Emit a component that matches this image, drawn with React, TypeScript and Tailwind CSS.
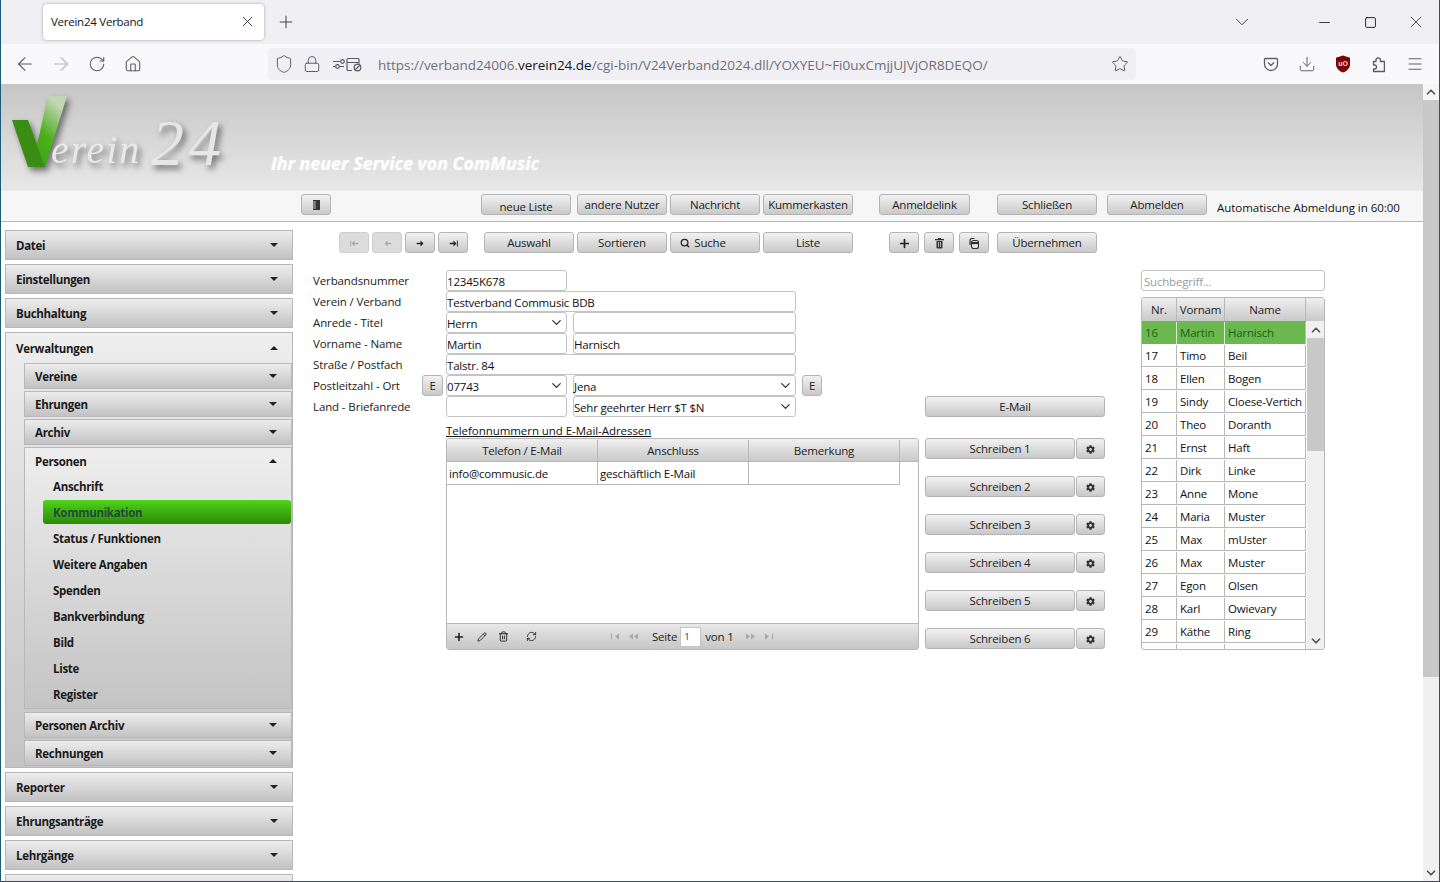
import React from "react";
import { ArrowLeft, ArrowRight, ChevronDown, ChevronUp, Download, House, Lock, Menu, Minus, Pencil, Plus, RefreshCw, RotateCw, Search, Shield, Square, Star, Trash2, X } from "lucide-react";
import { FaCog } from "react-icons/fa";

const Btn = ({ className = "", children }: { className?: string; children?: React.ReactNode }) => (
  <div
    className={`h-[21px] pt-[1px] flex items-center justify-center gap-1 shrink-0 rounded-[3px] border border-[#b4b4b4] bg-linear-to-b from-[#f2f2f2] to-[#c9c9c9] text-[11.5px] text-[#222] ${className}`}
  >
    {children}
  </div>
);

const Arrow = ({ up = false }: { up?: boolean }) => (
  <svg width="8" height="4" viewBox="0 0 8 4" className="shrink-0">
    <polygon points={up ? "4,0 8,4 0,4" : "0,0 8,0 4,4"} fill="#222" />
  </svg>
);

const MenuHead = ({ label, up = false, sub = false }: { label: string; up?: boolean; sub?: boolean }) => (
  <div
    className={`shrink-0 flex items-center justify-between pr-[14px] pl-[10px] font-bold text-[11.5px] tracking-[-0.3px] text-[#1a1a1a] ${sub ? "h-[26px]" : "h-[30px]"} ${
      up ? "" : "border border-[#b8b8b8] bg-linear-to-b from-[#ededed] to-[#c2c2c2]"
    }`}
  >
    <span className="pt-[2px]">{label}</span>
    <Arrow up={up} />
  </div>
);

const Field = ({ w, children, select = false }: { w: string; children?: React.ReactNode; select?: boolean }) => (
  <div
    className={`h-[21px] shrink-0 flex items-center justify-between pl-0 pr-[2px] pt-[2px] rounded-[3px] border border-[#c4c4c4] bg-white text-[11.5px] text-[#111] ${w}`}
  >
    <span>{children}</span>
    {select && <ChevronDown size={15} strokeWidth={2} className="-mt-[2px] text-[#333]" />}
  </div>
);

const FormRow = ({ label, children }: { label: string; children: React.ReactNode }) => (
  <div className="flex h-[21px] items-center">
    <div className="w-[133px] shrink-0 text-[11.5px] tracking-[-0.12px] text-[#222]">{label}</div>
    <div className="flex gap-[6px]">{children}</div>
  </div>
);

const persons = [
  ["16", "Martin", "Harnisch"],
  ["17", "Timo", "Beil"],
  ["18", "Ellen", "Bogen"],
  ["19", "Sindy", "Cloese-Vertich"],
  ["20", "Theo", "Doranth"],
  ["21", "Ernst", "Haft"],
  ["22", "Dirk", "Linke"],
  ["23", "Anne", "Mone"],
  ["24", "Maria", "Muster"],
  ["25", "Max", "mUster"],
  ["26", "Max", "Muster"],
  ["27", "Egon", "Olsen"],
  ["28", "Karl", "Owievary"],
  ["29", "Käthe", "Ring"],
  ["", "", ""],
];

const personLinks = ["Anschrift", "Kommunikation", "Status / Funktionen", "Weitere Angaben", "Spenden", "Bankverbindung", "Bild", "Liste", "Register"];

const PagerIcon = ({ flip = false, bar = true }: { flip?: boolean; bar?: boolean }) => (
  <svg width="10" height="7" viewBox="0 0 10 7" className={flip ? "-scale-x-100" : ""}>
    {bar ? <rect x="1" y="0.5" width="1" height="6" fill="#a8a8a8" /> : <polygon points="0,3.5 4,0.5 4,6.5" fill="#a8a8a8" />}
    <polygon points="5,3.5 9,0.5 9,6.5" fill="#a8a8a8" />
  </svg>
);

// jQuery-UI style seek arrows: small head, short shaft, optional end bar
const SeekIcon = ({ flip = false, bar = false, color = "#222" }: { flip?: boolean; bar?: boolean; color?: string }) => (
  <svg width="9" height="7" viewBox="0 0 12 9" className={flip ? "-scale-x-100" : ""}>
    <rect x="1" y="3.5" width="6" height="2" fill={color} />
    <polygon points="6,0.5 10,4.5 6,8.5" fill={color} />
    {bar && <rect x="10.5" y="0.5" width="1.2" height="8" fill={color} />}
  </svg>
);

const BrowserChrome = () => (
  <div className="shrink-0">
    <div className="h-[44px] bg-[#f0f0f4] flex items-center pl-[42px] text-[#222]">
      <div className="w-[221px] h-[36px] -mt-[1px] rounded-[4px] bg-white shadow-[0_0_3px_rgba(0,0,0,0.35)] flex items-center justify-between pl-[8px] pr-[8px] text-[11.5px] tracking-[-0.25px] text-[#15141a]">
        <span>Verein24 Verband</span>
        <X size={17} strokeWidth={1.1} />
      </div>
      <Plus size={20} strokeWidth={1} className="ml-[12px]" />
      <ChevronDown size={22} strokeWidth={0.9} className="ml-auto" />
      <Minus size={17} strokeWidth={1.2} className="ml-[63px]" />
      <Square size={13} strokeWidth={1.8} className="ml-[31px]" />
      <X size={20} strokeWidth={0.9} className="ml-[29px] mr-[13px]" />
    </div>
    <div className="h-[40px] bg-[#f9f9fb] flex items-center pl-[6px] text-[#5b5b66]">
      <div className="w-[36px] flex justify-center">
        <ArrowLeft size={22} strokeWidth={1.2} />
      </div>
      <div className="w-[36px] flex justify-center">
        <ArrowRight size={22} strokeWidth={1.2} className="text-[#b5b5bb]" />
      </div>
      <div className="w-[36px] flex justify-center">
        <RotateCw size={18} strokeWidth={1.4} />
      </div>
      <div className="w-[36px] flex justify-center">
        <House size={18} strokeWidth={1.4} />
      </div>
      <div className="ml-[117px] w-[868px] h-[32px] shrink-0 rounded-[4px] bg-[#f0f0f4] flex items-center pl-[6px] pr-[7px]">
        <Shield size={20} strokeWidth={1.2} />
        <Lock size={18} strokeWidth={1.3} className="ml-[9px]" />
        <svg width="32" height="16" viewBox="0 0 32 16" fill="none" stroke="#5b5b66" strokeWidth="1.2" className="ml-[12px]">
          <path d="M0 5.5h7M0 10.5h2" />
          <circle cx="9.5" cy="5.5" r="1.8" />
          <circle cx="4.5" cy="10.5" r="1.8" />
          <path d="M7 10.5h4M15 2.5h10a1 1 0 0 1 1 1v4M15 2.5a1 1 0 0 0-1 1v10a1 1 0 0 0 1 1h4M14 6.5h12" />
          <circle cx="24.5" cy="11.5" r="3.3" />
          <path d="M22.5 13.5l4-4" />
        </svg>
        <div className="ml-[13px] pt-[2px] text-[13.5px] tracking-[-0.02px] text-[#6f6f76] whitespace-nowrap">
          https://verband24006.<span className="text-[#15141a]">verein24.de</span>/cgi-bin/V24Verband2024.dll/YOXYEU~Fi0uxCmjjUJVjOR8DEQO/
        </div>
        <Star size={18} strokeWidth={1.3} className="ml-auto" />
      </div>
      <div className="ml-auto flex items-center pr-[6px]">
        <div className="w-[36px] flex justify-center">
          <svg width="16" height="16" viewBox="0 0 16 16" fill="none" stroke="#5b5b66" strokeWidth="1.3">
            <path d="M2.5 2.5h11a1 1 0 0 1 1 1V8a6.5 6.5 0 0 1-13 0V3.5a1 1 0 0 1 1-1z" />
            <path d="M5 6.5l3 3 3-3" />
          </svg>
        </div>
        <div className="w-[36px] flex justify-center">
          <Download size={18} strokeWidth={1.3} />
        </div>
        <div className="w-[36px] flex justify-center">
          <svg width="16" height="18" viewBox="0 0 16 18">
            <path d="M8 0.5l7 2.2v6.5c0 4-3 6.8-7 8.3-4-1.5-7-4.3-7-8.3V2.7z" fill="#800000" />
            <text x="8" y="11" textAnchor="middle" fontSize="7" fontWeight="700" fill="#f2dede" fontFamily="Liberation Sans, sans-serif">
              uO
            </text>
          </svg>
        </div>
        <div className="w-[36px] flex justify-center">
          <svg width="16" height="17" viewBox="0 0 16 17" fill="none" stroke="#5b5b66" strokeWidth="1.3" strokeLinejoin="round">
            <path d="M5 5.5V4a2.2 2.2 0 0 1 4.4 0v1.5h4v10H2.5v-2.5h1a2 2 0 0 0 0-4h-1V5.5z" />
          </svg>
        </div>
        <div className="w-[36px] flex justify-center">
          <Menu size={18} strokeWidth={1.3} />
        </div>
      </div>
    </div>
  </div>
);

const Banner = () => (
  <div className="h-[107px] shrink-0 flex bg-linear-to-b from-[#c6c6c6] to-[#e8e8e8]">
    <svg width="230" height="107" viewBox="0 0 230 107" className="shrink-0 drop-shadow-[3px_4px_3px_rgba(0,0,0,0.5)]">
      <defs>
        <linearGradient id="v-right" x1="0" y1="1" x2="0.4" y2="0">
          <stop offset="0" stopColor="#3aa30c" />
          <stop offset="0.5" stopColor="#4eb01e" />
          <stop offset="1" stopColor="#c3d6b8" />
        </linearGradient>
      </defs>
      <polygon points="11,36 27,36 44,83 27,83" fill="#388d12" />
      <polygon points="47,12 66,12 44,83 36,61" fill="url(#v-right)" />
      <text x="50" y="79" fontFamily="Liberation Serif" fontStyle="italic" fontSize="40" fill="#e9e9e9" textLength="88">
        erein
      </text>
      <text x="150" y="81" fontFamily="Liberation Serif" fontStyle="italic" fontSize="66" fill="#e6e6e6" textLength="70">
        24
      </text>
    </svg>
    <div className="ml-[40px] pt-[66px] text-[18px] tracking-[-0.08px] leading-[26px] font-bold italic text-white/90 whitespace-nowrap [text-shadow:0_0_2px_rgba(255,255,255,0.6)]">
      Ihr neuer Service von ComMusic
    </div>
  </div>
);

const TopBar = () => (
  <div className="h-[31px] shrink-0 flex pt-[3px] bg-[#f6f6f6] border-b border-[#b8b8b8]">
    <Btn className="ml-[300px] w-[30px]">
      <svg width="7" height="10" viewBox="0 0 7 10">
        <rect x="0" y="0" width="7" height="10" fill="#333" />
        <path d="M0 2h3M0 4h3M0 6h3M0 8h3" stroke="#ddd" strokeWidth="0.8" />
      </svg>
    </Btn>
    <Btn className="ml-[150px] w-[90px] pt-[4px]">neue Liste</Btn>
    <Btn className="ml-[6px] w-[90px]">andere Nutzer</Btn>
    <Btn className="ml-[3px] w-[90px]">Nachricht</Btn>
    <Btn className="ml-[3px] w-[90px]">Kummerkasten</Btn>
    <Btn className="ml-[26px] w-[91px]">Anmeldelink</Btn>
    <Btn className="ml-[27px] w-[100px]">Schließen</Btn>
    <Btn className="ml-[10px] w-[100px]">Abmelden</Btn>
    <div className="ml-[10px] pt-[5px] text-[11.5px] tracking-[-0.03px] text-[#111] whitespace-nowrap">Automatische Abmeldung in 60:00</div>
  </div>
);

const Sidebar = () => (
  <div className="w-[292px] shrink-0 pl-[4px] pt-[8px] flex flex-col gap-[4px] overflow-hidden">
    <MenuHead label="Datei" />
    <MenuHead label="Einstellungen" />
    <MenuHead label="Buchhaltung" />
    <div className="h-[436px] shrink-0 border border-[#b8b8b8] bg-linear-to-b from-[#eeeeee] to-[#c4c4c4] flex flex-col">
      <MenuHead label="Verwaltungen" up />
      <div className="pl-[18px] flex flex-col gap-[2px]">
        <MenuHead label="Vereine" sub />
        <MenuHead label="Ehrungen" sub />
        <MenuHead label="Archiv" sub />
        <div className="border border-[#b8b8b8] bg-linear-to-b from-[#eeeeee] to-[#c4c4c4]">
          <MenuHead label="Personen" up sub />
          <div className="flex flex-col">
            {personLinks.map((link) =>
              link === "Kommunikation" ? (
                <div
                  key={link}
                  className="h-[24px] mb-[2px] ml-[18px] pt-[1px] rounded-[3px] bg-linear-to-b from-[#4fd418] to-[#2d8a07] flex items-center pl-[10px] font-bold text-[11.5px] tracking-[-0.3px] text-[#234a3c]"
                >
                  {link}
                </div>
              ) : (
                <div key={link} className="h-[26px] pl-[28px] flex items-center font-bold text-[11.5px] tracking-[-0.3px] text-[#1a1a1a]">
                  {link}
                </div>
              ),
            )}
          </div>
        </div>
        <div className="mt-[1px]">
          <MenuHead label="Personen Archiv" sub />
        </div>
        <MenuHead label="Rechnungen" sub />
      </div>
    </div>
    <MenuHead label="Reporter" />
    <MenuHead label="Ehrungsanträge" />
    <MenuHead label="Lehrgänge" />
    <MenuHead label="" />
  </div>
);

const ActionBar = () => (
  <div className="flex pl-[46px] pt-[10px]">
    <Btn className="w-[30px] bg-none bg-[#dcdcdc] border-[#cfcfcf]">
      <SeekIcon flip bar color="#a9a9a9" />
    </Btn>
    <Btn className="ml-[3px] w-[30px] bg-none bg-[#dcdcdc] border-[#cfcfcf]">
      <SeekIcon flip color="#a9a9a9" />
    </Btn>
    <Btn className="ml-[3px] w-[30px]">
      <SeekIcon />
    </Btn>
    <Btn className="ml-[3px] w-[30px]">
      <SeekIcon bar />
    </Btn>
    <Btn className="ml-[16px] w-[90px]">Auswahl</Btn>
    <Btn className="ml-[3px] w-[90px]">Sortieren</Btn>
    <Btn className="ml-[3px] w-[90px] pr-[24px]">
      <Search size={10} strokeWidth={3} />
      Suche
    </Btn>
    <Btn className="ml-[3px] w-[90px]">Liste</Btn>
    <Btn className="ml-[36px] w-[30px]">
      <Plus size={13} strokeWidth={3.2} />
    </Btn>
    <Btn className="ml-[5px] w-[30px]">
      <svg width="9" height="11" viewBox="0 0 9 11" fill="#333">
        <rect x="0" y="1" width="9" height="1.3" />
        <rect x="3" y="0" width="3" height="1.2" />
        <path d="M1.5 3h6v6.5a1 1 0 0 1-1 1h-4a1 1 0 0 1-1-1zM3 4v5h.8V4zM5.2 4v5H6V4z" fillRule="evenodd" />
      </svg>
    </Btn>
    <Btn className="ml-[5px] w-[30px]">
      <svg width="10" height="11" viewBox="0 0 10 11" fill="none" stroke="#333" strokeWidth="1.2">
        <path d="M1 7V2.5a2 2 0 0 1 2-2h2.5" />
        <rect x="2.5" y="2.5" width="7" height="8" rx="2" fill="#e4e4e4" />
        <path d="M2.5 5h7" strokeWidth="2.2" />
      </svg>
    </Btn>
    <Btn className="ml-[8px] w-[100px]">Übernehmen</Btn>
  </div>
);

const FormColumn = () => (
  <div className="w-[606px] shrink-0">
    <FormRow label="Verbandsnummer">
      <Field w="w-[121px]">12345K678</Field>
    </FormRow>
    <FormRow label="Verein / Verband">
      <Field w="w-[350px]">Testverband Commusic BDB</Field>
    </FormRow>
    <FormRow label="Anrede - Titel">
      <Field w="w-[121px]" select>
        Herrn
      </Field>
      <Field w="w-[223px]" />
    </FormRow>
    <FormRow label="Vorname - Name">
      <Field w="w-[121px]">Martin</Field>
      <Field w="w-[223px]">Harnisch</Field>
    </FormRow>
    <FormRow label="Straße / Postfach">
      <Field w="w-[350px]">Talstr. 84</Field>
    </FormRow>
    <div className="flex h-[21px] items-center">
      <div className="w-[109px] shrink-0 text-[11.5px] tracking-[-0.12px] text-[#222]">Postleitzahl - Ort</div>
      <Btn className="w-[21px]">E</Btn>
      <div className="ml-[3px] flex gap-[6px]">
        <Field w="w-[121px]" select>
          07743
        </Field>
        <Field w="w-[223px]" select>
          Jena
        </Field>
        <Btn className="w-[20px]">E</Btn>
      </div>
    </div>
    <FormRow label="Land - Briefanrede">
      <Field w="w-[121px]" />
      <Field w="w-[223px]" select>
        Sehr geehrter Herr $T $N
      </Field>
    </FormRow>
    <div className="ml-[133px] mt-[7px] h-[14px] leading-[14px] text-[11.5px] tracking-[-0.05px] text-[#111] underline">Telefonnummern und E-Mail-Adressen</div>
    <div className="ml-[133px] h-[212px] w-[473px] rounded-[3px] border border-[#b8b8b8] flex flex-col text-[11.5px] overflow-hidden">
      <div className="h-[23px] shrink-0 flex pt-[1px] bg-linear-to-b from-[#f0f0f0] to-[#c9c9c9] border-b border-[#b8b8b8] text-[#222]">
        <div className="w-[151px] border-r border-[#b8b8b8] flex items-center justify-center">Telefon / E-Mail</div>
        <div className="w-[151px] border-r border-[#b8b8b8] flex items-center justify-center">Anschluss</div>
        <div className="w-[151px] border-r border-[#b8b8b8] flex items-center justify-center">Bemerkung</div>
      </div>
      <div className="h-[23px] w-[453px] shrink-0 flex border-b border-r border-[#b8b8b8] text-[#111]">
        <div className="w-[151px] border-r border-[#b8b8b8] flex items-center pl-[2px] pt-[1px]">info@commusic.de</div>
        <div className="w-[151px] border-r border-[#b8b8b8] flex items-center pl-[2px] pt-[1px]">geschäftlich E-Mail</div>
      </div>
      <div className="mt-auto h-[26px] shrink-0 flex items-center bg-linear-to-b from-[#e8e8e8] to-[#c6c6c6] border-t border-[#b8b8b8] pl-[6px] text-[#222]">
        <Plus size={12} strokeWidth={3.2} />
        <Pencil size={10} strokeWidth={2} className="ml-[12px]" />
        <Trash2 size={11} strokeWidth={2} className="ml-[11px]" />
        <RefreshCw size={11} strokeWidth={1.8} className="ml-[17px]" />
        <div className="ml-[73px] flex gap-[9px]">
          <PagerIcon />
          <PagerIcon bar={false} />
        </div>
        <span className="ml-[13px]">Seite</span>
        <div className="ml-[3px] w-[21px] h-[20px] bg-white border border-[#c4c4c4] text-[9.5px] leading-[18px] pl-[3px] text-[#333]">1</div>
        <span className="ml-[4px]">von 1</span>
        <div className="ml-[11px] flex gap-[9px]">
          <PagerIcon flip bar={false} />
          <PagerIcon flip />
        </div>
      </div>
    </div>
  </div>
);

const LetterColumn = () => (
  <div className="ml-[6px] w-[180px] shrink-0 pt-[126px]">
    <Btn className="w-full">E-Mail</Btn>
    <div className="mt-[21px] flex flex-col gap-[17px]">
      {[1, 2, 3, 4, 5, 6].map((n) => (
        <div key={n} className="flex gap-[1px]">
          <Btn className="w-[150px]">Schreiben {n}</Btn>
          <Btn className="w-[29px]">
            <FaCog size={9} className="text-[#333]" />
          </Btn>
        </div>
      ))}
    </div>
  </div>
);

const PersonList = () => (
  <div className="ml-[36px] w-[184px] shrink-0">
    <div className="h-[21px] rounded-[3px] border border-[#c4c4c4] pl-[2px] pt-[2px] flex items-center text-[11.5px] text-[#9a9a9a]">Suchbegriff...</div>
    <div className="mt-[6px] h-[353px] rounded-[3px] border border-[#b8b8b8] overflow-hidden flex flex-col text-[11.5px]">
      <div className="h-[23px] shrink-0 flex bg-linear-to-b from-[#f0f0f0] to-[#c9c9c9] text-[#222]">
        <div className="w-[35px] border-r border-[#b8b8b8] flex items-center justify-center">Nr.</div>
        <div className="w-[48px] border-r border-[#b8b8b8] flex items-center justify-center overflow-hidden whitespace-nowrap">Vornam</div>
        <div className="w-[81px] border-r border-[#b8b8b8] flex items-center justify-center">Name</div>
      </div>
      <div className="flex min-h-0 flex-1">
        <div className="w-[164px] shrink-0">
          {persons.map((p, i) => (
            <div
              key={i}
              className={`h-[23px] pt-[1px] flex ${i === 0 ? "bg-[#6ab84e] text-[#1c5f1c] divide-x divide-[#d8ecd0]" : "border-b border-[#b8b8b8] text-[#111] divide-x divide-[#b8b8b8]"}`}
            >
              <div className="w-[35px] pl-[3px] flex items-center">{p[0]}</div>
              <div className="w-[48px] pl-[3px] flex items-center">{p[1]}</div>
              <div className="w-[81px] pl-[3px] flex items-center border-r border-[#b8b8b8] whitespace-nowrap overflow-hidden">{p[2]}</div>
            </div>
          ))}
        </div>
        <div className="flex-1 ml-[1px] bg-[#f0f0f0] flex flex-col">
          <div className="h-[17px] flex items-center justify-center">
            <ChevronUp size={14} strokeWidth={3} className="text-[#555]" />
          </div>
          <div className="h-[113px] bg-[#c8c8c8]" />
          <div className="mt-auto h-[17px] flex items-center justify-center">
            <ChevronDown size={14} strokeWidth={3} className="text-[#555]" />
          </div>
        </div>
      </div>
    </div>
  </div>
);

const PageScrollbar = () => (
  <div className="flex-1 bg-[#f0f0f0] flex flex-col">
    <div className="h-[16px] flex items-center justify-center bg-[#f6f6f6]">
      <ChevronUp size={14} strokeWidth={3} className="text-[#555]" />
    </div>
    <div className="h-[577px] bg-[#c8c8c8]" />
    <div className="mt-auto h-[16px] flex items-center justify-center">
      <ChevronDown size={14} strokeWidth={3} className="text-[#555]" />
    </div>
  </div>
);

export default function App() {
  return (
    <div className="w-[1440px] h-[882px] overflow-hidden flex flex-col bg-white border-l border-r border-b border-[#1c5a78] tracking-[-0.2px] font-['Open_Sans',sans-serif]">
      <BrowserChrome />
      <div className="flex flex-1 min-h-0">
        <div className="w-[1422px] shrink-0 flex flex-col">
          <Banner />
          <TopBar />
          <div className="flex flex-1 min-h-0">
            <Sidebar />
            <div className="flex-1 min-w-0">
              <ActionBar />
              <div className="mt-[17px] pl-[20px] flex">
                <FormColumn />
                <LetterColumn />
                <PersonList />
              </div>
            </div>
          </div>
        </div>
        <PageScrollbar />
      </div>
    </div>
  );
}
